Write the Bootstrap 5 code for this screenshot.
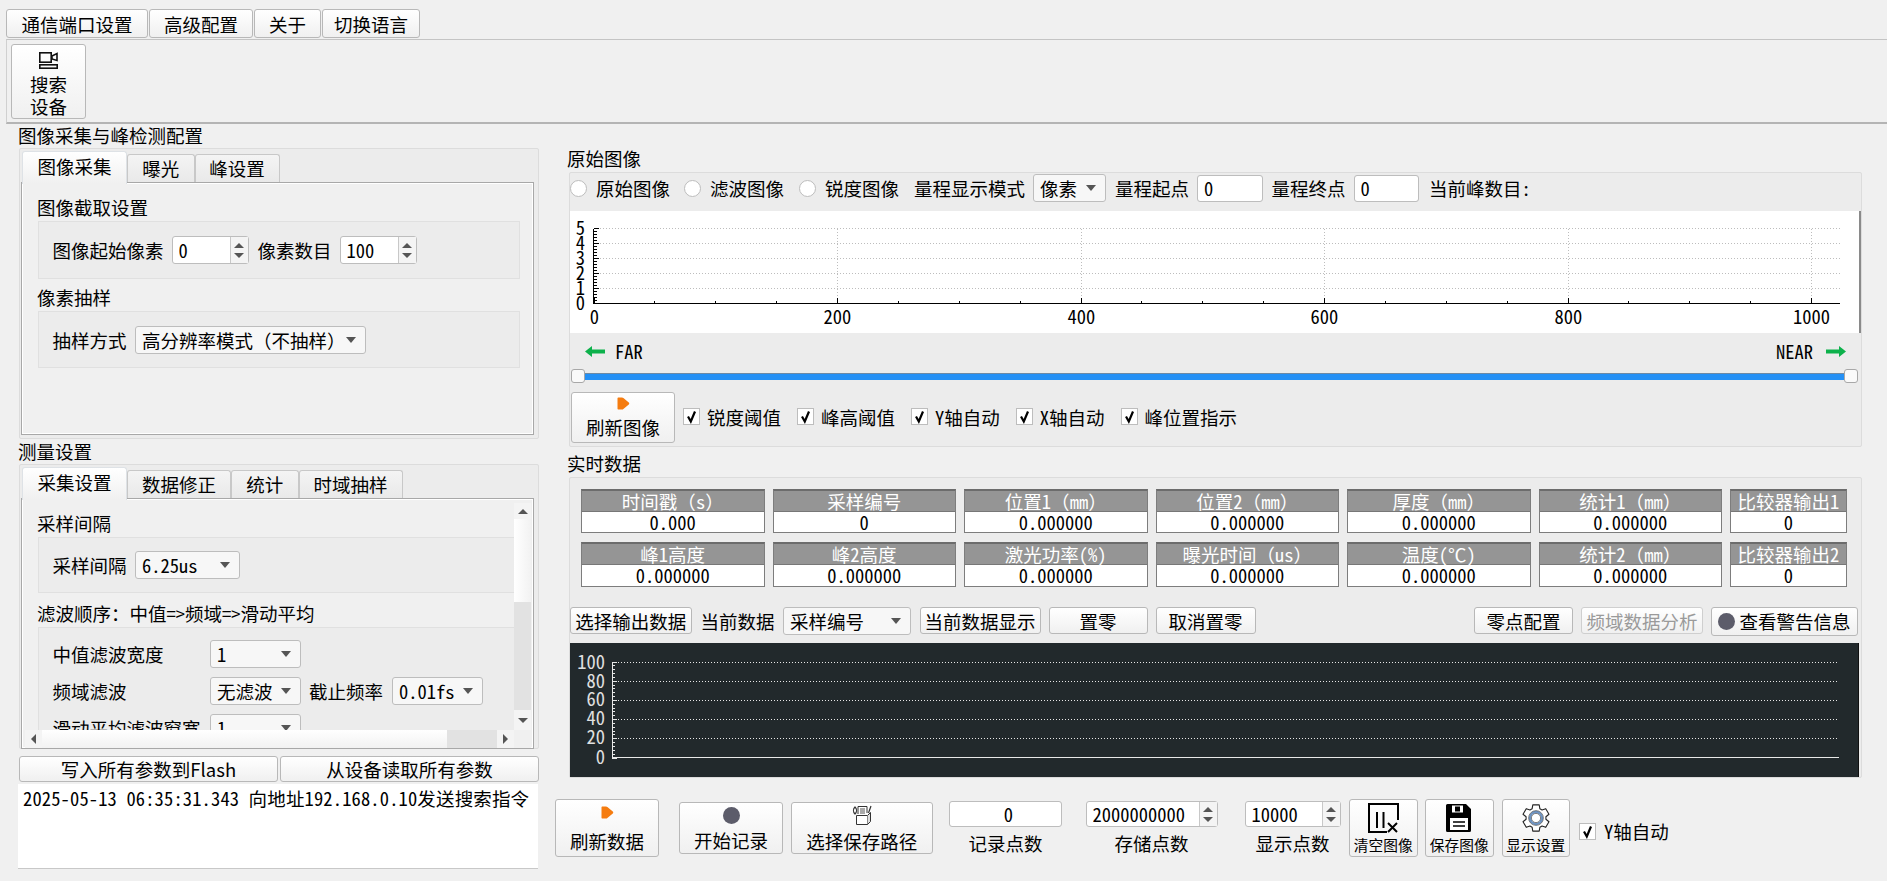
<!DOCTYPE html>
<html lang="zh-CN">
<head>
    <meta charset="UTF-8">
    <meta name="viewport" content="width=device-width, initial-scale=1.0">
    <title>图像采集与峰检测配置</title>
    <link href="https://cdn.jsdelivr.net/npm/bootstrap@5.3.0/dist/css/bootstrap.min.css" rel="stylesheet">
    <style>
        body {
            width: 1887px;
            height: 881px;
            overflow: hidden;
            background: #f0f0f0;
            color: #000;
            font-family: "Noto Sans CJK SC", "Liberation Sans", sans-serif;
            font-feature-settings: "hwid";
            font-size: 18.5px;
            line-height: 22px;
        }
        .fw { font-feature-settings: normal; }
        .qbtn {
            padding: 0;
            color: #000;
            font-size: 18.5px;
            line-height: 22px;
            border: 1px solid #b8b8b8;
            border-radius: 3px;
            background: linear-gradient(#fff, #f0f0f0);
            white-space: nowrap;
        }
        .qbtn:disabled { color: #9a9a9a; opacity: 1; border-color: #cfcfcf; }

        /* 菜单和工具栏 */
        .menu-bar { padding: 9px 0 0 6px; height: 39px; gap: 1px; }
        .menu-bar .qbtn { height: 29px; }
        .w-menu1 { width: 142px; }
        .w-menu2 { width: 104px; }
        .w-menu3 { width: 67px; }
        .w-menu4 { width: 98px; }
        .tool-bar {
            margin-left: 6px;
            height: 85px;
            padding: 4px 4px;
            border-top: 1px solid #c4c4c4;
            border-left: 1px solid #d0d0d0;
            border-bottom: 2px solid #b4b4b4;
        }
        .btn-search { width: 75px; height: 75px; padding-top: 7px; }
        .btn-search svg { margin-bottom: 4px; }

        .left-col { width: 521px; margin-left: 18px; }
        .right-col { width: 1295px; margin-left: 28px; }
        .sec-title { height: 24px; line-height: 22px; }
        .sec-title.gap-title { height: 25px; line-height: 24px; }
        .right-title { height: 26px; line-height: 24px; }
        .mt-r1 { margin-top: 22px; }
        .mt-r2 { margin-top: 4px; }
        .group {
            background: #ececec;
            border: 1px solid #dcdcdc;
            border-radius: 2px;
        }

        /* 选项卡 */
        .tab-group { margin-left: 1px; width: 520px; padding: 2px 4px 0 1px; }
        .tab-group.g1 { height: 291px; }
        .tab-group.g2 { height: 285px; }
        .nav-tabs {
            border: 0;
            height: 31px;
            padding-left: 1px;
            align-items: flex-end;
        }
        .nav-tabs .nav-link {
            display: block;
            height: 28px;
            padding: 0;
            margin: 0;
            color: #000;
            text-align: center;
            line-height: 27px;
            border: 1px solid #c8c8c8;
            border-bottom: 0;
            border-radius: 3px 3px 0 0;
            background: linear-gradient(#f4f4f4, #e9e9e9);
        }
        .nav-tabs .nav-link.active {
            height: 33px;
            line-height: 28px;
            color: #000;
            background: linear-gradient(#fff, #f0f0f0);
            position: relative;
            z-index: 1;
            margin-bottom: -2px;
        }
        .w-t1 { width: 105px; }
        .w-t2 { width: 67.5px; }
        .w-t3 { width: 85px; }
        .w-t4 { width: 104px; }
        .tab-box {
            background: #f0f0f0;
            border: 1px solid #a8a8a8;
            box-shadow: inset 0 0 0 1px #fff;
        }
        .g1 .tab-box { height: 253px; padding: 14px 0 0 15px; }
        .g2 .tab-box { height: 251px; padding: 4px 1px 0 3px; }
        .sub-title { height: 20px; line-height: 20px; margin-bottom: 4px; }
        .sub-title.second { margin-top: 8px; }
        .frame {
            background: #ececec;
            border: 1px solid #e0e0e0;
            padding-left: 13.5px;
        }
        .g1 .frame { width: 482px; margin-left: 1px; height: 58px; }
        .g1 .frame.h57 { height: 57px; }

        .scroll-box {
            display: grid;
            grid-template-columns: 489px 17px;
            grid-template-rows: 227px 18px;
        }
        .scroll-body { overflow: hidden; padding: 10px 0 0 12px; background: #f0f0f0; }
        .scroll-body .frame { margin-left: 1px; border-right: 0; }
        .frame-a { height: 56px; }
        .frame-b { height: 140px; padding-top: 12px; }
        .sub-title.mid { margin-top: 10px; }
        .w-label { width: 157.5px; }
        .row-gap { margin-bottom: 9px; }

        .sb-v { display: flex; flex-direction: column; background: #e2e2e2; }
        .sb-h { display: flex; background: #e2e2e2; }
        .sb-btn { background: #f4f4f4; display: flex; align-items: center; justify-content: center; flex: none; }
        .sb-v .sb-btn { height: 16px; }
        .sb-v .sb-btn.last { height: 20px; margin-top: auto; }
        .sb-h .sb-btn { width: 17px; }
        .sb-thumb-v { height: 83px; background: linear-gradient(90deg, #fff, #f2f2f2); }
        .sb-thumb-h { width: 405px; background: linear-gradient(#fff, #f2f2f2); }
        .sb-h .sb-btn.last { margin-left: auto; }
        .sb-corner { background: #f0f0f0; }
        .tri-u, .tri-d, .tri-l, .tri-r { width: 0; height: 0; border: 0 solid transparent; }
        .tri-u { border-width: 0 5px 5px; border-bottom-color: #555; }
        .tri-d { border-width: 5px 5px 0; border-top-color: #555; }
        .tri-l { border-width: 5px 5px 5px 0; border-right-color: #555; }
        .tri-r { border-width: 5px 0 5px 5px; border-left-color: #555; }

        .flash-row { margin: 7px 0 0 1px; width: 520px; gap: 2px; }
        .flash-row .qbtn { height: 26px; flex: 1 1 0; }
        .log-box {
            width: 520px;
            height: 85px;
            margin-top: 2px;
            padding: 3px 5px;
            background: #fff;
            border-bottom: 1px solid #c8c8c8;
            white-space: nowrap;
            letter-spacing: .15px;
        }

        /* 输入控件 */
        .form-control.qinput, .form-select.qselect {
            min-height: 0;
            padding: 0 0 0 6px;
            color: #000;
            font-size: 18.5px;
            line-height: 22px;
            border: 1px solid #bdbdbd;
            border-radius: 3px;
            font-family: inherit;
            font-feature-settings: "hwid";
            box-shadow: none;
        }
        .form-select.qselect {
            height: 28px;
            padding-right: 20px;
            background-color: #f7f7f7;
            background-image: url("data:image/svg+xml,%3csvg xmlns='http://www.w3.org/2000/svg' viewBox='0 0 10 6'%3e%3cpath fill='%23555' d='M0 0h10L5 6z'/%3e%3c/svg%3e");
            background-position: right 9px center;
            background-size: 10px 6px;
            white-space: nowrap;
        }
        .spin {
            height: 28px;
            background: #fff;
            border: 1px solid #bdbdbd;
            border-radius: 3px;
        }
        .spin .qinput { border: 0; background: transparent; height: 26px; flex: 1 1 0; min-width: 0; }
        .spin-btns {
            width: 18px;
            border-left: 1px solid #c8c8c8;
            background: #f4f4f4;
            gap: 5px;
        }
        .w-spin { width: 77px; }
        .w-combo-wide { width: 231px; }
        .w-combo-a { width: 105px; }
        .w-combo-b { width: 91px; }
        .ms-8 { margin-left: 8px; }
        .ms-9 { margin-left: 9px; }
        .ms-8h { margin-left: 8.5px; }

        .form-check-input.qcheck {
            width: 17px;
            height: 17px;
            margin-top: 0;
            flex: none;
            background-color: #fff;
            border: 1px solid #bdbdbd;
            border-radius: 0;
            box-shadow: none;
        }
        .form-check-input.qcheck:checked {
            background-color: #fff;
            background-image: url("data:image/svg+xml,%3csvg xmlns='http://www.w3.org/2000/svg' viewBox='0 0 17 17'%3e%3cpath fill='none' stroke='%23000' stroke-width='2.2' d='M5 8.5l2.8 5L12 3.5'/%3e%3c/svg%3e");
            background-size: 17px 17px;
        }
        .form-check-input.qcheck[type=radio] { border-radius: 50%; }

        /* 原始图像 */
        .image-group { height: 275px; width: 1293px; margin-left: 2px; }
        .image-head { height: 30px; }
        .image-head .form-check-input { margin-right: 9px; }
        .ms-14 { margin-left: 14px; }
        .ms-15 { margin-left: 15px; }
        .ms-10 { margin-left: 10px; }
        .w-combo-c { width: 73px; }
        .w-range { width: 65.5px; height: 27px; }
        .plot-light { margin: 8px 0 0 0; display: block; background: #fff; border-right: 2px solid #8a8a8a; }
        .far-row { height: 36px; padding: 0 15px; }
        .far-gap { gap: 10px; }
        .near-gap { gap: 13px; }
        .slider { height: 14px; margin: 0 3px 0 1px; }
        .slider-track { height: 7px; background: #2490f5; border-top: 1px solid #6d8aa5; }
        .slider-handle {
            position: absolute;
            top: 0;
            width: 14px;
            height: 14px;
            background: #fafafa;
            border: 1px solid #a8a8a8;
            border-radius: 3px;
        }
        .slider-handle.right { right: 0; }
        .refresh-row { margin-top: 9px; padding-left: 1px; }
        .btn-refresh-img { width: 104px; height: 51px; padding-top: 4px; }
        .btn-refresh-img svg { margin-bottom: 6px; }
        .check-item { margin: 0 0 2px 8px; }
        .check-item span { margin-left: 7px; }
        .check-item + .check-item { margin-left: 16px; }

        /* 实时数据 */
        .data-group { height: 301px; width: 1293px; margin-left: 2px; padding: 11px 0 0 0; }
        .data-grid {
            display: grid;
            width: 1266px;
            margin-left: 11px;
            grid-template-columns: repeat(6, 1fr) 117px;
            grid-template-rows: 44px 45px;
            column-gap: 8px;
            row-gap: 9px;
        }
        .cell { border: 1px solid #7d7d7d; border-top: 2px solid #6c6c6c; text-align: center; background: #fff; }
        .cell .head { height: 21px; line-height: 20px; background: #959595; color: #fff; border-bottom: 1px solid #777; white-space: nowrap; }
        .cell .val { height: 20px; line-height: 20px; }
        .data-bar { margin-top: 20px; height: 27px; padding-right: 3px; }
        .data-bar .qbtn { height: 27px; }
        .w-b1 { width: 121.5px; }
        .w-b2 { width: 121px; }
        .w-b3 { width: 99px; }
        .w-b4 { width: 100px; }
        .w-b5 { width: 122px; }
        .w-b6 { width: 147px; }
        .w-combo-d { width: 127.5px; }
        .btn-alert { height: 28.5px !important; margin-bottom: -1.5px; }
        .dot { display: inline-block; width: 17px; height: 17px; border-radius: 50%; background: #5c5c6a; flex: none; }
        .plot-dark { margin-top: 9px; display: block; background: #22292c; border-right: 1px solid #111; }

        /* 底部按钮 */
        .bottom-row { margin: 21px 0 0 -12px; }
        .btn-tall { height: 58px; }
        .btn-mid { height: 52px; margin-top: 3px; padding-top: 4px; }
        .w-b104 { width: 104px; }
        .w-b141 { width: 141.5px; }
        .w-b68 { width: 68.5px; }
        .btn-refresh-data { padding-top: 6px; }
        .btn-refresh-data svg { margin-bottom: 11px; }
        .btn-small { padding-top: 3px; font-size: 14.7px; line-height: 18px; }
        .btn-small svg { margin-bottom: 3px; }
        .btn-mid svg, .btn-mid .dot { margin-bottom: 5px; }
        .btn-path { padding-top: 2px; }
        .field { margin-top: 2px; }
        .field .spin, .field .qinput.solo { height: 26px; }
        .field .spin .qinput { height: 24px; }
        .field-label { margin-top: 5px; text-align: center; }
        .w-f1 { width: 113px; }
        .w-f2 { width: 132px; }
        .w-f3 { width: 96px; }
        .ms-20 { margin-left: 20px; }
        .ms-165 { margin-left: 16.5px; }
        .ms-235 { margin-left: 23.5px; }
        .ms-27 { margin-left: 27px; }
        .ms-75 { margin-left: 7.5px; }
        .y-check { margin: 21px 0 0 9px; }
        .plot-text { font-family: "Noto Sans CJK SC", sans-serif; font-size: 18.5px; font-feature-settings: "hwid"; }
    </style>
</head>
<body>
    <div class="d-flex menu-bar">
        <button class="btn qbtn w-menu1">通信端口设置</button>
        <button class="btn qbtn w-menu2">高级配置</button>
        <button class="btn qbtn w-menu3">关于</button>
        <button class="btn qbtn w-menu4">切换语言</button>
    </div>
    <div class="tool-bar">
        <button class="btn qbtn btn-search d-flex flex-column align-items-center">
            <svg width="19" height="17" viewBox="0 0 19 17">
                <rect x="0.8" y="0.8" width="11.4" height="9.4" fill="none" stroke="#111" stroke-width="1.6"/>
                <path d="M13 4l5-2.500v7L13 7z" fill="none" stroke="#111" stroke-width="1.6"/>
                <rect x="0.8" y="12.8" width="17.4" height="3.4" fill="none" stroke="#111" stroke-width="1.6"/>
            </svg>
            <span>搜索</span>
            <span>设备</span>
        </button>
    </div>

    <div class="d-flex">
        <div class="left-col">
            <div class="sec-title">图像采集与峰检测配置</div>
            <div class="group tab-group g1">
                <ul class="nav nav-tabs">
                    <li class="nav-item"><a class="nav-link active w-t1">图像采集</a></li>
                    <li class="nav-item"><a class="nav-link w-t2">曝光</a></li>
                    <li class="nav-item"><a class="nav-link w-t3">峰设置</a></li>
                </ul>
                <div class="tab-box">
                    <div class="sub-title">图像截取设置</div>
                    <div class="frame d-flex align-items-center">
                        <span>图像起始像素</span>
                        <div class="spin d-flex w-spin ms-8">
                            <input class="form-control qinput" value="0">
                            <div class="spin-btns d-flex flex-column align-items-center justify-content-center"><i class="tri-u"></i><i class="tri-d"></i></div>
                        </div>
                        <span class="ms-9">像素数目</span>
                        <div class="spin d-flex w-spin ms-8">
                            <input class="form-control qinput" value="100">
                            <div class="spin-btns d-flex flex-column align-items-center justify-content-center"><i class="tri-u"></i><i class="tri-d"></i></div>
                        </div>
                    </div>
                    <div class="sub-title second">像素抽样</div>
                    <div class="frame h57 d-flex align-items-center">
                        <span>抽样方式</span>
                        <div class="form-select qselect w-combo-wide ms-8h d-flex align-items-center">高分辨率模式<span class="fw">（</span>不抽样<span class="fw">）</span></div>
                    </div>
                </div>
            </div>

            <div class="sec-title gap-title">测量设置</div>
            <div class="group tab-group g2">
                <ul class="nav nav-tabs">
                    <li class="nav-item"><a class="nav-link active w-t1">采集设置</a></li>
                    <li class="nav-item"><a class="nav-link w-t4">数据修正</a></li>
                    <li class="nav-item"><a class="nav-link w-t2">统计</a></li>
                    <li class="nav-item"><a class="nav-link w-t4">时域抽样</a></li>
                </ul>
                <div class="tab-box">
                    <div class="scroll-box">
                        <div class="scroll-body">
                            <div class="sub-title">采样间隔</div>
                            <div class="frame frame-a d-flex align-items-center">
                                <span>采样间隔</span>
                                <select class="form-select qselect w-combo-a ms-8h"><option>6.25us</option></select>
                            </div>
                            <div class="sub-title mid">滤波顺序：中值=&gt;频域=&gt;滑动平均</div>
                            <div class="frame frame-b">
                                <div class="d-flex align-items-center row-gap">
                                    <span class="w-label">中值滤波宽度</span>
                                    <select class="form-select qselect w-combo-b"><option>1</option></select>
                                </div>
                                <div class="d-flex align-items-center row-gap">
                                    <span class="w-label">频域滤波</span>
                                    <select class="form-select qselect w-combo-b"><option>无滤波</option></select>
                                    <span class="ms-8">截止频率</span>
                                    <select class="form-select qselect w-combo-b ms-9"><option>0.01fs</option></select>
                                </div>
                                <div class="d-flex align-items-center row-gap">
                                    <span class="w-label">滑动平均滤波窗宽</span>
                                    <select class="form-select qselect w-combo-b"><option>1</option></select>
                                </div>
                            </div>
                        </div>
                        <div class="sb-v">
                            <div class="sb-btn"><i class="tri-u"></i></div>
                            <div class="sb-thumb-v"></div>
                            <div class="sb-btn last"><i class="tri-d"></i></div>
                        </div>
                        <div class="sb-h">
                            <div class="sb-btn"><i class="tri-l"></i></div>
                            <div class="sb-thumb-h"></div>
                            <div class="sb-btn last"><i class="tri-r"></i></div>
                        </div>
                        <div class="sb-corner"></div>
                    </div>
                </div>
            </div>

            <div class="d-flex flash-row">
                <button class="btn qbtn">写入所有参数到Flash</button>
                <button class="btn qbtn">从设备读取所有参数</button>
            </div>
            <div class="log-box">2025-05-13 06:35:31.343 向地址192.168.0.10发送搜索指令</div>
        </div>

        <div class="right-col">
            <div class="sec-title right-title mt-r1">原始图像</div>
            <div class="group image-group">
                <div class="d-flex align-items-center image-head">
                    <input class="form-check-input qcheck" type="radio" name="img"><span>原始图像</span>
                    <input class="form-check-input qcheck ms-14" type="radio" name="img"><span>滤波图像</span>
                    <input class="form-check-input qcheck ms-15" type="radio" name="img"><span>锐度图像</span>
                    <span class="ms-15">量程显示模式</span>
                    <select class="form-select qselect w-combo-c ms-8"><option>像素</option></select>
                    <span class="ms-9">量程起点</span>
                    <input class="form-control qinput w-range ms-8" value="0">
                    <span class="ms-9">量程终点</span>
                    <input class="form-control qinput w-range ms-8" value="0">
                    <span class="ms-10">当前峰数目:</span>
                </div>
                <svg id="plot-image" class="plot-light" width="1291" height="122" viewBox="0 0 1289 122"></svg>
                <div class="d-flex align-items-center justify-content-between far-row">
                    <div class="d-flex align-items-center far-gap">
                        <svg width="20" height="11" viewBox="0 0 20 11"><path d="M0 5.500L7 0v3.500h13v4H7V11z" fill="#0db14b"/></svg>
                        <span>FAR</span>
                    </div>
                    <div class="d-flex align-items-center near-gap">
                        <span>NEAR</span>
                        <svg width="20" height="11" viewBox="0 0 20 11"><path d="M20 5.500L13 0v3.500H0v4h13V11z" fill="#0db14b"/></svg>
                    </div>
                </div>
                <div class="slider position-relative d-flex align-items-center">
                    <div class="slider-track w-100"></div>
                    <div class="slider-handle"></div>
                    <div class="slider-handle right"></div>
                </div>
                <div class="d-flex align-items-center refresh-row">
                    <button class="btn qbtn btn-refresh-img d-flex flex-column align-items-center">
                        <svg width="13" height="13" viewBox="0 0 13 13"><path d="M1.500 0.500h3.500c0.500 0 1 0.200 1.400 0.600l5.400 4.400c0.600 0.500 0.600 1.500 0 2l-5.400 4.400c-0.400 0.400-0.900 0.600-1.400 0.600H1.500c-0.600 0-1-0.400-1-1v-10c0-0.600 0.400-1 1-1z" fill="#f57c10"/></svg>
                        <span>刷新图像</span>
                    </button>
                    <label class="check-item d-flex align-items-center"><input class="form-check-input qcheck" type="checkbox" checked><span>锐度阈值</span></label>
                    <label class="check-item d-flex align-items-center"><input class="form-check-input qcheck" type="checkbox" checked><span>峰高阈值</span></label>
                    <label class="check-item d-flex align-items-center"><input class="form-check-input qcheck" type="checkbox" checked><span>Y轴自动</span></label>
                    <label class="check-item d-flex align-items-center"><input class="form-check-input qcheck" type="checkbox" checked><span>X轴自动</span></label>
                    <label class="check-item d-flex align-items-center"><input class="form-check-input qcheck" type="checkbox" checked><span>峰位置指示</span></label>
                </div>
            </div>

            <div class="sec-title right-title mt-r2">实时数据</div>
            <div class="group data-group">
                <div class="data-grid" id="data-grid"></div>
                <div class="d-flex align-items-center data-bar">
                    <button class="btn qbtn w-b1">选择输出数据</button>
                    <span class="ms-9">当前数据</span>
                    <select class="form-select qselect w-combo-d ms-8h"><option>采样编号</option></select>
                    <button class="btn qbtn w-b2 ms-9">当前数据显示</button>
                    <button class="btn qbtn w-b3 ms-8">置零</button>
                    <button class="btn qbtn w-b4 ms-8">取消置零</button>
                    <button class="btn qbtn w-b3 ms-auto">零点配置</button>
                    <button class="btn qbtn w-b5 ms-8" disabled>频域数据分析</button>
                    <button class="btn qbtn w-b6 ms-8 btn-alert d-flex align-items-center justify-content-center gap-1"><i class="dot"></i>查看警告信息</button>
                </div>
                <svg id="plot-data" class="plot-dark" width="1289" height="134" viewBox="0 0 1289 134"></svg>
            </div>

            <div class="d-flex align-items-start bottom-row">
                <button class="btn qbtn btn-tall w-b104 btn-refresh-data d-flex flex-column align-items-center">
                    <svg width="13" height="13" viewBox="0 0 13 13"><path d="M1.500 0.500h3.500c0.500 0 1 0.200 1.400 0.600l5.400 4.400c0.600 0.500 0.600 1.500 0 2l-5.400 4.400c-0.400 0.400-0.900 0.600-1.400 0.600H1.500c-0.600 0-1-0.400-1-1v-10c0-0.600 0.400-1 1-1z" fill="#f57c10"/></svg>
                    <span>刷新数据</span>
                </button>
                <button class="btn qbtn btn-mid w-b104 ms-20 d-flex flex-column align-items-center">
                    <i class="dot"></i>
                    <span>开始记录</span>
                </button>
                <button class="btn qbtn btn-mid btn-path w-b141 ms-8 d-flex flex-column align-items-center">
                    <svg width="20" height="20" viewBox="0 0 20 20" fill="none" stroke="#333" stroke-width="1">
                        <path d="M4.500 10.500h11v9h-11z" fill="#fff"/>
                        <path d="M15.500 10.500l3-3v9l-3 3" fill="#ddd"/>
                        <path d="M6 9V1.500h9V8"/>
                        <path d="M8 4h5M8 6h5M8 8h5" stroke="#555"/>
                        <path d="M3 9c-2-2-2-5 0-7c2 2 2 5 0 7zM16.500 8l2.500-7" stroke-width="1.2"/>
                    </svg>
                    <span>选择保存路径</span>
                </button>
                <div class="field ms-165 w-f1">
                    <input class="form-control qinput solo text-center" value="0">
                    <div class="field-label">记录点数</div>
                </div>
                <div class="field ms-235 w-f2">
                    <div class="spin d-flex">
                        <input class="form-control qinput" value="2000000000">
                        <div class="spin-btns d-flex flex-column align-items-center justify-content-center"><i class="tri-u"></i><i class="tri-d"></i></div>
                    </div>
                    <div class="field-label">存储点数</div>
                </div>
                <div class="field ms-27 w-f3">
                    <div class="spin d-flex">
                        <input class="form-control qinput" value="10000">
                        <div class="spin-btns d-flex flex-column align-items-center justify-content-center"><i class="tri-u"></i><i class="tri-d"></i></div>
                    </div>
                    <div class="field-label">显示点数</div>
                </div>
                <button class="btn qbtn btn-tall btn-small w-b68 ms-8h d-flex flex-column align-items-center">
                    <svg width="31" height="30" viewBox="0 0 31 30" fill="none" stroke="#000" stroke-width="2">
                        <path d="M30 17V1H1v28h18"/>
                        <path d="M9 9v16M15.500 9v16"/>
                        <path d="M20 20l9 9M29 20l-9 9"/>
                    </svg>
                    <span>清空图像</span>
                </button>
                <button class="btn qbtn btn-tall btn-small w-b68 ms-75 d-flex flex-column align-items-center">
                    <svg width="26" height="30" viewBox="0 0 26 30">
                        <path d="M1.500 1h18.500L25 6v21.500A1.500 1.500 0 0 1 23.500 29h-22A1.500 1.500 0 0 1 0 27.500V2.500A1.500 1.500 0 0 1 1.500 1z" fill="#000"/>
                        <rect x="6" y="2.500" width="11" height="7" fill="#fff"/>
                        <rect x="9" y="3.500" width="5" height="5" fill="#000"/>
                        <rect x="4" y="15" width="18" height="12" fill="#fff"/>
                        <path d="M7 19h12M7 23h12" stroke="#000" stroke-width="1.600"/>
                    </svg>
                    <span>保存图像</span>
                </button>
                <button class="btn qbtn btn-tall btn-small w-b68 ms-8 d-flex flex-column align-items-center">
                    <svg id="gear-icon" width="28" height="30" viewBox="-14 -15 28 30"></svg>
                    <span>显示设置</span>
                </button>
                <label class="d-flex align-items-center y-check"><input class="form-check-input qcheck me-2" type="checkbox" checked><span>Y轴自动</span></label>
            </div>
        </div>
    </div>

    <script>
        // 实时数据格子
        const CELLS = [
            ['时间戳（s）', '0.000'], ['采样编号', '0'], ['位置1（mm）', '0.000000'], ['位置2（mm）', '0.000000'],
            ['厚度（mm）', '0.000000'], ['统计1（mm）', '0.000000'], ['比较器输出1', '0'],
            ['峰1高度', '0.000000'], ['峰2高度', '0.000000'], ['激光功率(%)', '0.000000'], ['曝光时间（us）', '0.000000'],
            ['温度(℃)', '0.000000'], ['统计2（mm）', '0.000000'], ['比较器输出2', '0']
        ];
        const fullParens = (text) => text.replace(/[（）]/g, (c) => `<span class="fw">${c}</span>`);
        document.getElementById('data-grid').innerHTML = CELLS.map(([head, val]) =>
            `<div class="cell"><div class="head">${fullParens(head)}</div><div class="val">${val}</div></div>`).join('');

        const line = (x1, y1, x2, y2, color, dash) =>
            `<line x1="${x1}" y1="${y1}" x2="${x2}" y2="${y2}" stroke="${color}" shape-rendering="crispEdges"${dash ? ' stroke-dasharray="1 2"' : ''}/>`;
        const label = (x, y, text, anchor, color) =>
            `<text class="plot-text" x="${x}" y="${y}" text-anchor="${anchor}" fill="${color}">${text}</text>`;

        // 原始图像曲线
        function drawImagePlot() {
            const x0 = 23.5, yTop = 17.5, yBottom = 92.5, xEnd = 1270;
            const pxPerUnit = 1.2175;
            let out = '';
            for (let v = 0; v <= 5; v++) {
                const y = yBottom - v * 15;
                if (v > 0) out += line(x0, y, xEnd, y, '#bdbdbd', true);
                out += label(15, y + 6, v, 'end', '#000');
            }
            for (let y = yBottom; y >= yTop; y -= 3) out += line(x0, y, x0 + (Math.round((yBottom - y) / 3) % 5 ? 3 : 5), y, '#000');
            for (let v = 0; v <= 1000; v += 50) {
                const x = Math.round(x0 + v * pxPerUnit) + 0.5;
                if (v % 200 === 0) {
                    if (v > 0) out += line(x, yTop, x, yBottom, '#bdbdbd', true);
                    out += line(x, yBottom - 6, x, yBottom, '#000');
                    out += label(x, 113, v, 'middle', '#000');
                } else {
                    out += line(x, yBottom - 3, x, yBottom, '#000');
                }
            }
            out += line(x0, yTop, x0, yBottom, '#000');
            out += line(x0, yBottom, xEnd, yBottom, '#000');
            document.getElementById('plot-image').innerHTML = out;
        }

        // 实时数据曲线
        function drawDataPlot() {
            const x0 = 42.5, yZero = 114.5, step = 19.2, xEnd = 1270;
            let out = '';
            for (let i = 0; i <= 5; i++) {
                const y = Math.round(yZero - i * step) + 0.5;
                if (i > 0) out += line(x0, y, xEnd - 2, y, '#e8e8e8', true);
                out += line(x0, y, x0 + 5, y, '#e8e8e8');
                out += label(35, y + 6, i * 20, 'end', '#e0e0e0');
            }
            for (let i = 0; i < 25; i++) {
                const y = Math.round(yZero - i * step / 5) + 0.5;
                out += line(x0, y, x0 + 3, y, '#e8e8e8');
            }
            out += line(x0, yZero - 5 * step, x0, yZero, '#e8e8e8');
            out += line(x0, yZero, xEnd, yZero, '#e8e8e8');
            document.getElementById('plot-data').innerHTML = out;
        }

        // 齿轮图标
        function drawGear() {
            const teeth = 6, pts = [];
            for (let i = 0; i < teeth; i++) {
                const a = i * 2 * Math.PI / teeth - Math.PI / 2;
                [[-0.40, 10], [-0.24, 13.5], [0.24, 13.5], [0.40, 10]].forEach(([d, r]) => {
                    pts.push((Math.cos(a + d) * r).toFixed(2) + ' ' + (Math.sin(a + d) * r).toFixed(2));
                });
            }
            document.getElementById('gear-icon').innerHTML =
                `<path d="M${pts.join('L')}Z" fill="#fff" stroke="#222" stroke-width="1.1" stroke-linejoin="round"/>` +
                `<circle r="6" fill="none" stroke="#6f95c4" stroke-width="2.4"/><circle r="7.400" fill="none" stroke="#333" stroke-width="0.6"/><circle r="4.600" fill="#fff" stroke="#333" stroke-width="0.6"/>`;
        }

        drawImagePlot();
        drawDataPlot();
        drawGear();
    </script>
    <script src="https://cdn.jsdelivr.net/npm/bootstrap@5.3.0/dist/js/bootstrap.bundle.min.js"></script>
</body>
</html>
